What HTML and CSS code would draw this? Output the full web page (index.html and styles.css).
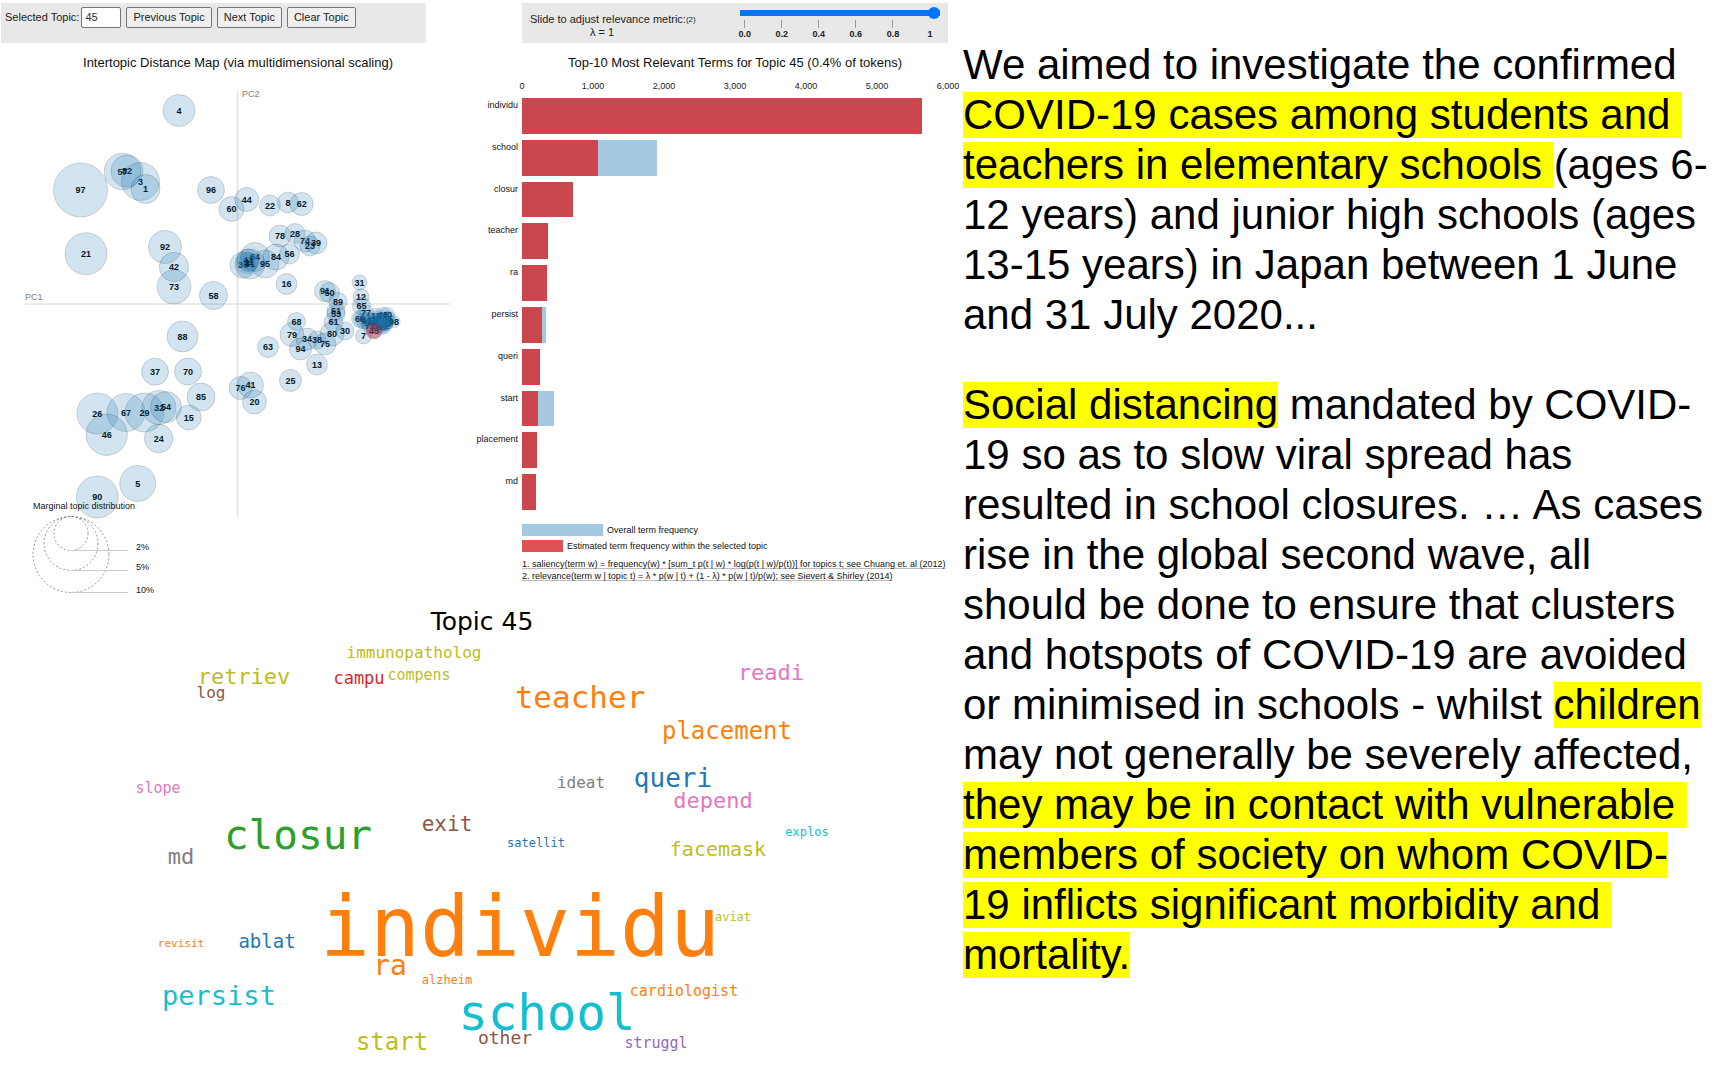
FILE: index.html
```html
<!DOCTYPE html>
<html lang="en">
<head>
<meta charset="utf-8">
<title>Topic 45</title>
<link rel="stylesheet" href="styles.css">
</head>
<body>
<main class="page">
  <div class="visuals">
    <div class="charts">
      <section class="map">
        <form class="toolbar">
          <div class="field">
            <label for="topic">Selected Topic:</label>
            <input class="topic-input" id="topic" type="text" value="45">
          </div>
          <button class="btn" type="button">Previous Topic</button>
          <button class="btn" type="button">Next Topic</button>
          <button class="btn" type="button">Clear Topic</button>
        </form>
        <h2 class="chart-title">Intertopic Distance Map (via multidimensional scaling)</h2>
        <svg class="map-plot" viewBox="0 82 475 514" role="img" aria-label="Intertopic distance map">
          <line class="axis" x1="25" y1="304" x2="450" y2="304"/>
          <line class="axis" x1="237.5" y1="91" x2="237.5" y2="517"/>
          <text class="axis-name" x="25" y="300">PC1</text>
          <text class="axis-name" x="242" y="97">PC2</text>
          <g id="bubbles"></g>
          <text class="small" x="33" y="509">Marginal topic distribution</text>
          <g class="sizes">
            <circle cx="71" cy="533.5" r="17"/>
            <circle cx="71" cy="543.5" r="27"/>
            <circle cx="71" cy="554.5" r="38"/>
          </g>
          <g class="size-lines">
            <line x1="71" y1="550.5" x2="128" y2="550.5"/>
            <line x1="71" y1="570.5" x2="128" y2="570.5"/>
            <line x1="71" y1="592.5" x2="128" y2="592.5"/>
          </g>
          <text class="small" x="136" y="550">2%</text>
          <text class="small" x="136" y="570">5%</text>
          <text class="small" x="136" y="593">10%</text>
        </svg>
      </section>

      <section class="terms">
        <form class="toolbar relevance">
          <label class="relevance-label" for="lambda"><span>Slide to adjust relevance metric:<small>(2)</small></span><span class="lambda">λ = 1</span></label>
          <div class="slider">
            <input class="range" id="lambda" type="range" min="0" max="1" step="0.01" value="1">
            <div class="scale"><span>0.0</span><span>0.2</span><span>0.4</span><span>0.6</span><span>0.8</span><span class="last">1</span></div>
          </div>
        </form>
        <h2 class="chart-title bars-title">Top-10 Most Relevant Terms for Topic 45 (0.4% of tokens)</h2>
        <div class="ticks"><span>0</span><span>1,000</span><span>2,000</span><span>3,000</span><span>4,000</span><span>5,000</span><span>6,000</span></div>
        <div class="bars">
          <div class="row"><span class="term">individu</span><div class="track"><div class="overall" style="width:94.0%"></div><div class="within" style="width:94.0%"></div></div></div>
          <div class="row"><span class="term">school</span><div class="track"><div class="overall" style="width:31.6%"></div><div class="within" style="width:17.9%"></div></div></div>
          <div class="row"><span class="term">closur</span><div class="track"><div class="overall" style="width:12.0%"></div><div class="within" style="width:12.0%"></div></div></div>
          <div class="row"><span class="term">teacher</span><div class="track"><div class="overall" style="width:6.1%"></div><div class="within" style="width:6.1%"></div></div></div>
          <div class="row"><span class="term">ra</span><div class="track"><div class="overall" style="width:5.8%"></div><div class="within" style="width:5.8%"></div></div></div>
          <div class="row"><span class="term">persist</span><div class="track"><div class="overall" style="width:5.6%"></div><div class="within" style="width:4.8%"></div></div></div>
          <div class="row"><span class="term">queri</span><div class="track"><div class="overall" style="width:4.3%"></div><div class="within" style="width:4.3%"></div></div></div>
          <div class="row"><span class="term">start</span><div class="track"><div class="overall" style="width:7.6%"></div><div class="within" style="width:3.8%"></div></div></div>
          <div class="row"><span class="term">placement</span><div class="track"><div class="overall" style="width:3.6%"></div><div class="within" style="width:3.6%"></div></div></div>
          <div class="row"><span class="term">md</span><div class="track"><div class="overall" style="width:3.2%"></div><div class="within" style="width:3.2%"></div></div></div>
        </div>
        <div class="legend">
          <div class="key"><span class="swatch swatch-overall"></span>Overall term frequency</div>
          <div class="key"><span class="swatch swatch-within"></span>Estimated term frequency within the selected topic</div>
        </div>
        <div class="notes">
          <a href="#saliency">1. saliency(term w) = frequency(w) * [sum_t p(t | w) * log(p(t | w)/p(t))] for topics t; see Chuang et. al (2012)</a>
          <a href="#relevance">2. relevance(term w | topic t) = λ * p(w | t) + (1 - λ) * p(w | t)/p(w); see Sievert &amp; Shirley (2014)</a>
        </div>
      </section>
    </div>

    <svg class="cloud" viewBox="0 596 951 471" role="img" aria-label="Word cloud for topic 45">
      <text class="cloud-title" x="482" y="630">Topic 45</text>
      <g class="words">
        <text class="olive" font-size="16" x="414" y="658">immunopatholog</text>
        <text class="olive" font-size="22" x="244" y="684">retriev</text>
        <text class="red" font-size="17" x="359" y="684">campu</text>
        <text class="olive" font-size="15" x="419" y="680">compens</text>
        <text class="brown" font-size="16" x="211" y="698">log</text>
        <text class="pink" font-size="22" x="771" y="680">readi</text>
        <text class="orange" font-size="31" x="580" y="708">teacher</text>
        <text class="orange" font-size="24" x="727" y="739">placement</text>
        <text class="pink" font-size="15" x="158" y="793">slope</text>
        <text class="gray" font-size="16" x="581" y="788">ideat</text>
        <text class="blue" font-size="26" x="673" y="787">queri</text>
        <text class="pink" font-size="22" x="713" y="808">depend</text>
        <text class="green" font-size="41" x="298" y="849">closur</text>
        <text class="brown" font-size="21" x="447" y="831">exit</text>
        <text class="cyan" font-size="12" x="807" y="836">explos</text>
        <text class="blue" font-size="12" x="536" y="847">satellit</text>
        <text class="olive" font-size="20" x="718" y="856">facemask</text>
        <text class="gray" font-size="22" x="181" y="864">md</text>
        <text class="olive" font-size="12" x="733" y="921">aviat</text>
        <text class="orange" font-size="83" x="520" y="956">individu</text>
        <text class="orange" font-size="11" x="181" y="947">revisit</text>
        <text class="blue" font-size="19" x="267" y="948">ablat</text>
        <text class="orange" font-size="28" x="390" y="975">ra</text>
        <text class="orange" font-size="12" x="447" y="984">alzheim</text>
        <text class="orange" font-size="15" x="684" y="996">cardiologist</text>
        <text class="cyan" font-size="27" x="219" y="1005">persist</text>
        <text class="cyan" font-size="49" x="547" y="1030">school</text>
        <text class="brown" font-size="18" x="505" y="1044">other</text>
        <text class="olive" font-size="24" x="392" y="1050">start</text>
        <text class="purple" font-size="15" x="656" y="1048">struggl</text>
      </g>
    </svg>
  </div>

  <article class="abstracts">
    <p>We aimed to investigate the confirmed<br><mark>COVID-19 cases among students and&nbsp;<br>teachers in elementary schools </mark>(ages 6-<br>12 years) and junior high schools (ages<br>13-15 years) in Japan between 1 June<br>and 31 July 2020...</p>
    <p><mark>Social distancing</mark> mandated by COVID-<br>19 so as to slow viral spread has<br>resulted in school closures. … As cases<br>rise in the global second wave, all<br>should be done to ensure that clusters<br>and hotspots of COVID-19 are avoided<br>or minimised in schools - whilst <mark>children</mark><br>may not generally be severely affected,<br><mark>they may be in contact with vulnerable&nbsp;<br>members of society on whom COVID-<br>19 inflicts significant morbidity and&nbsp;<br>mortality.</mark></p>
  </article>
</main>
<script src="map.js"></script>
</body>
</html>
```

FILE: styles.css
```css
* { box-sizing: border-box; }

body {
  margin: 0;
  background: #fff;
  color: #000;
  font-family: "Liberation Sans", Arial, sans-serif;
}

.page {
  display: grid;
  grid-template-columns: minmax(0, 951fr) minmax(0, 782fr);
}

.charts {
  display: grid;
  grid-template-columns: minmax(0, 475fr) minmax(0, 476fr);
  padding-top: 3px;
}

.toolbar {
  display: flex;
  align-items: flex-start;
  gap: 5px;
  height: 40px;
  padding: 4px;
  background: #e8e8e8;
  font-size: 11px;
  line-height: 21px;
  color: #222;
}

.map .toolbar { margin: 0 49px 0 1px; }

.field { display: flex; gap: 2px; }

.topic-input {
  width: 40px;
  height: 21px;
  padding: 0 3px;
  border: 1px solid #767676;
  border-radius: 2px;
  background: #fff;
  font: inherit;
  color: #333;
}

.btn {
  height: 21px;
  padding: 0 6px;
  border: 1px solid #767676;
  border-radius: 2px;
  background: #efefef;
  font: inherit;
  line-height: 19px;
  color: #222;
  white-space: nowrap;
}

.chart-title {
  margin: 0 49px 0 50px;
  padding-top: 10px;
  height: 39px;
  font-size: 13px;
  font-weight: 400;
  line-height: 20px;
  text-align: center;
  white-space: nowrap;
  color: #111;
}

.map-plot, .cloud {
  display: block;
  width: 100%;
  height: auto;
}

.axis { stroke: #e4e4e4; stroke-width: 1.5; }
.axis-name { font-size: 9px; fill: #808080; }
.small { font-size: 9px; fill: #111; }
.bubble { fill: #1f77b4; fill-opacity: .2; stroke: #000; stroke-opacity: .15; stroke-width: 1; }
.bubble.dense { stroke-opacity: .05; }
.bubble.selected { fill: #a02848; fill-opacity: .5; }
.bubble-label { font-size: 9px; font-weight: 700; text-anchor: middle; fill: #000; }
.sizes { fill: none; stroke: #888; stroke-width: .9; stroke-dasharray: 2 2; }
.size-lines { stroke: #ccc; stroke-width: 1; }

.terms { padding-right: 3px; }

.relevance {
  margin-left: 47px;
  padding: 0 8px;
  gap: 44px;
}

.relevance-label {
  display: flex;
  flex-direction: column;
  padding-top: 10px;
  line-height: 12px;
  white-space: nowrap;
}

.relevance-label small { font-size: 8px; vertical-align: 1px; }
.lambda { padding-left: 60px; }

.slider { flex: 1; min-width: 0; }

.range {
  appearance: none;
  display: block;
  width: 100%;
  height: 12px;
  margin: 4px 0 0;
  background: linear-gradient(#0075ff, #0075ff) center / 100% 6px no-repeat;
  border-radius: 4px;
}

.range::-webkit-slider-thumb {
  appearance: none;
  width: 12px;
  height: 12px;
  border-radius: 50%;
  background: #0075ff;
}

.scale {
  display: flex;
  justify-content: space-between;
  margin: 1px 10px 0 5px;
  font-size: 9px;
  font-weight: 700;
  line-height: 12px;
}

.scale span {
  display: flex;
  flex-direction: column;
  align-items: center;
  width: 0;
}

.scale span::before {
  content: "";
  flex: none;
  width: 1px;
  height: 8px;
  background: #999;
}

.scale .last::before { background: none; }

.bars-title { margin: 0 0 0 47px; height: 35px; }

.ticks {
  display: flex;
  justify-content: space-between;
  margin-left: 47px;
  height: 20px;
  font-size: 9px;
  line-height: 16px;
  color: #222;
}

.ticks span {
  display: flex;
  justify-content: center;
  width: 0;
}

.bars {
  display: grid;
  grid-template-rows: repeat(10, 1fr);
  gap: 6px;
  height: 412px;
}

.row {
  display: grid;
  grid-template-columns: 43px minmax(0, 1fr);
  gap: 4px;
}

.term {
  justify-self: end;
  padding-top: 2px;
  font-size: 9px;
  line-height: 10px;
  color: #111;
}

.track { display: grid; }

.overall, .within { grid-area: 1 / 1; }
.overall { background: #a5c8e1; }
.within { background: #cc474d; }

.legend {
  display: grid;
  gap: 4px;
  margin: 14px 0 0 47px;
  font-size: 9px;
  line-height: 12px;
  color: #111;
}

.key { display: flex; gap: 4px; }
.swatch { height: 12px; }
.swatch-overall { width: 81px; background: #a5c8e1; }
.swatch-within { width: 41px; background: #de5253; }

.notes {
  display: flex;
  flex-direction: column;
  align-items: flex-start;
  margin: 6px 0 0 47px;
  font-size: 9px;
  line-height: 12px;
  white-space: nowrap;
}

.notes a {
  color: #111;
  text-decoration: underline;
  text-decoration-color: #bbb;
  text-decoration-skip-ink: none;
  text-underline-offset: 1px;
}

.cloud-title {
  font-family: "DejaVu Sans", sans-serif;
  font-size: 25px;
  text-anchor: middle;
}

.words {
  font-family: "DejaVu Sans Mono", monospace;
  text-anchor: middle;
}

.blue { fill: #1f77b4; }
.orange { fill: #ff7f0e; }
.green { fill: #2ca02c; }
.red { fill: #d62728; }
.purple { fill: #9467bd; }
.brown { fill: #8c564b; }
.pink { fill: #e377c2; }
.gray { fill: #7f7f7f; }
.olive { fill: #bcbd22; }
.cyan { fill: #17becf; }

.abstracts {
  padding: 40px 0 0 12px;
  font-size: 42px;
  line-height: 50px;
  white-space: nowrap;
}

.abstracts p { margin: 0 0 40px; }
.abstracts p:last-child { margin: 0; }

mark {
  color: inherit;
  background: linear-gradient(#ff0, #ff0) center / 100% 46px no-repeat;
  -webkit-box-decoration-break: clone;
  box-decoration-break: clone;
}
```

FILE: map.js
```js
// Each topic: label, centre x, centre y, radius.
const topics = [
  [4, 179, 110.5, 16], [97, 80.5, 190, 27], [57, 122.5, 171.5, 18.3], [82, 127, 171, 16],
  [3, 140.5, 181.5, 19], [1, 145.5, 189, 14.5], [96, 211, 190, 13.5], [60, 231.5, 209, 12.5],
  [44, 246.7, 199.5, 12], [22, 270, 205.5, 10.5], [8, 288, 202.5, 10.5], [62, 301.7, 204, 11.5],
  [21, 86, 253.7, 21], [92, 165, 247, 16.5], [42, 174, 267, 14.7], [73, 174, 287, 17],
  [58, 213.5, 295.5, 14], [78, 280, 236, 11], [28, 295, 233.5, 10], [74, 305, 241, 11],
  [23, 310, 246, 10], [39, 316, 243, 11], [36, 243, 265, 13], [43, 248, 260, 11],
  [64, 255, 257, 14.5], [81, 250, 264, 15], [95, 265, 264, 14], [84, 276, 257, 13],
  [56, 289.5, 254, 10], [16, 286.5, 284, 10.5], [91, 325, 291, 10.5], [50, 329.5, 292.5, 10],
  [89, 338, 301.5, 9], [51, 336, 311, 9], [53, 336, 314, 9], [61, 333.5, 322, 9.5],
  [31, 359.5, 282.5, 7.5], [12, 361, 297, 8], [65, 361.5, 306, 9], [68, 296.5, 321.5, 9],
  [79, 292, 334.5, 12], [94, 300.5, 349, 11], [34, 307, 339, 11], [38, 317, 340, 9],
  [75, 325, 344, 11], [80, 332, 334, 12], [30, 345, 331, 9], [63, 268, 347, 10.5],
  [13, 317, 364.5, 10.5], [25, 290.5, 380.5, 11], [76, 240.5, 388, 11.5], [41, 250.5, 385, 13],
  [20, 254.5, 402, 12], [88, 182.5, 336.5, 15.5], [37, 155, 371.7, 13.5], [70, 188, 371.5, 13.5],
  [85, 201, 397, 14], [15, 188.7, 417.5, 12.5], [24, 158.7, 438.5, 14.3], [26, 97.3, 413.5, 20.5],
  [67, 126, 412.5, 19], [29, 144.5, 412.5, 19.5], [32, 159, 407.5, 17], [54, 166, 407, 15.5],
  [46, 106.7, 434.7, 20.7], [5, 137.7, 483.5, 18], [90, 97.3, 497, 21], [7, 363.5, 336, 8]
];

// Tightly packed topics: their labels lie beneath all of their bubbles.
const packed = [
  [2, 247, 263, 11], [11, 249, 262, 10],
  [98, 394, 321.5, 6.5], [77, 366, 313, 8], [69, 360, 319, 9],
  [6, 362, 319, 9], [9, 364, 321, 8], [10, 367, 320, 8], [14, 369, 323, 8],
  [17, 372, 321, 8], [18, 376, 316, 8], [19, 376, 319, 8], [27, 378, 321, 8],
  [33, 380, 324, 8], [35, 382, 320, 8], [40, 387, 315, 8], [48, 383, 315, 8],
  [47, 383, 322, 8], [49, 385, 323, 8], [52, 387, 321, 8], [55, 388, 319, 8],
  [59, 381, 327, 8], [66, 378, 326, 8], [71, 384, 326, 8], [72, 370, 326, 8],
  [83, 386, 324, 7], [86, 377, 323, 7], [87, 380, 321, 7], [93, 383, 324, 7],
  [45, 374, 331, 8]
];

const SELECTED = 45;
const NS = "http://www.w3.org/2000/svg";
const layer = document.getElementById("bubbles");

function makeLabel([id, x, y]) {
  const label = document.createElementNS(NS, "text");
  label.setAttribute("class", "bubble-label");
  label.setAttribute("x", x);
  label.setAttribute("y", y + 3);
  label.textContent = id;
  return label;
}

function makeBubble([id, x, y, r], kind) {
  const bubble = document.createElementNS(NS, "circle");
  bubble.setAttribute("class", `bubble ${kind} ${id === SELECTED ? "selected" : ""}`);
  bubble.setAttribute("cx", x);
  bubble.setAttribute("cy", y);
  bubble.setAttribute("r", r);
  return bubble;
}

for (const topic of topics) layer.append(makeLabel(topic), makeBubble(topic, ""));
for (const topic of packed) layer.append(makeLabel(topic));
for (const topic of packed) layer.append(makeBubble(topic, "dense"));
```
